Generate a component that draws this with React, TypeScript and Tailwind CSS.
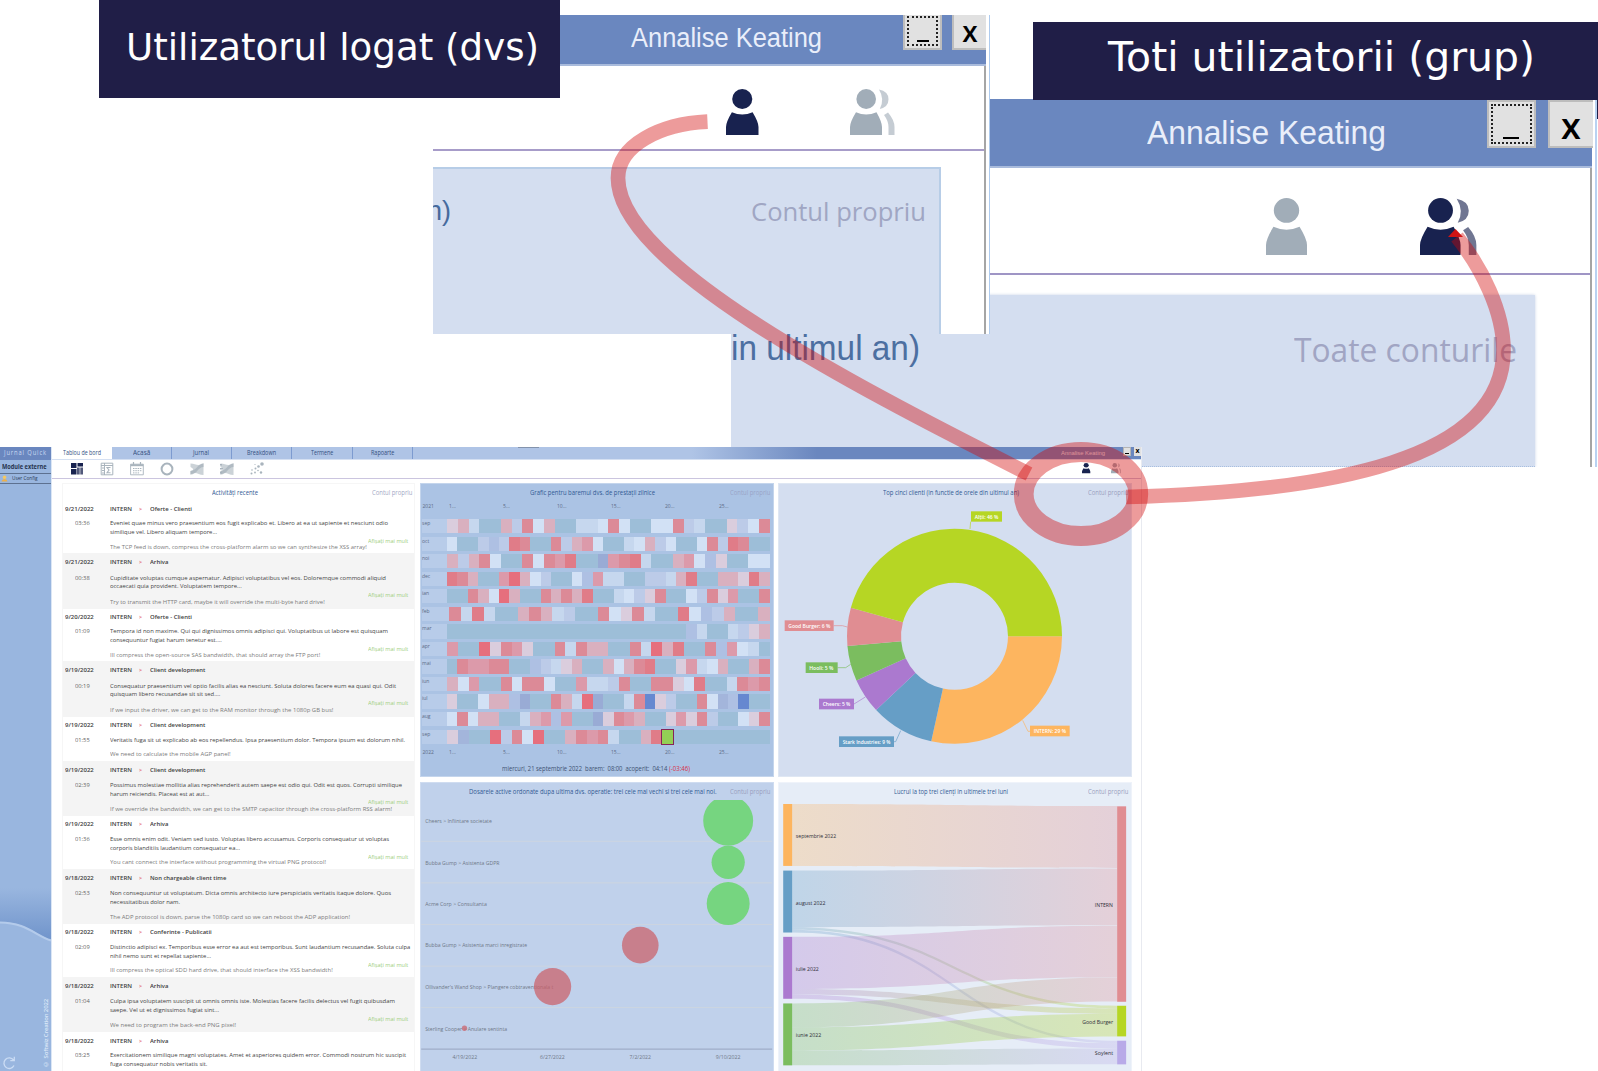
import React, { useLayoutEffect, useRef } from "react";

/** One line of text, condensed or stretched horizontally to an exact width. */
function Fit({ w, className = "", children }: { w: number; className?: string; children: React.ReactNode }) {
  const ref = useRef<HTMLSpanElement>(null);
  useLayoutEffect(() => {
    const el = ref.current;
    if (!el) return;
    el.style.transform = "none";
    const natural = el.getBoundingClientRect().width;
    if (natural > 0) el.style.transform = `scaleX(${w / natural})`;
  }, [w, children]);
  return (
    <span className={"block shrink-0 whitespace-pre " + className} style={{ width: w }}>
      <span ref={ref} className="inline-block origin-left">
        {children}
      </span>
    </span>
  );
}

function Person({ className }: { className: string }) {
  return (
    <svg viewBox="0 0 33 46" preserveAspectRatio="none" className={className} fill="currentColor">
      <ellipse cx="16.5" cy="10" rx="10.2" ry="10" />
      <path d="M6 23.2Q16.5 28 27 23.2Q33 33 33 38V46H0V38Q0 33 6 23.2Z" />
    </svg>
  );
}

function Group({ className }: { className: string }) {
  return (
    <svg viewBox="0 0 45 46" preserveAspectRatio="none" className={className} fill="currentColor">
      <ellipse cx="16.2" cy="10" rx="9.8" ry="10" />
      <path d="M6 23.2Q16.2 28 26.5 23.2Q32 33 32 38V46H0V38Q0 33 6 23.2Z" />
      <path opacity=".62" d="M29 .6Q38.5 2.5 38.5 10.3Q38.5 18 29.8 20Q35 10.500 29 .6Z" />
      <path opacity=".62" d="M34 26L38 23.400Q44.500 31 44.500 38V46H38.500V38Q38.500 32 34 26Z" />
    </svg>
  );
}

type Activity = {
  date: string; time: string; name: string; nw: number;
  lines: [string, number][]; note?: [string, number]; more?: boolean;
};

const activities: Activity[] = [
  { date: "9/21/2022", time: "03:36", name: "Oferte - Clienti", nw: 42, lines: [["Eveniet quae minus vero praesentium eos fugit explicabo et. Libero at ea ut sapiente et nesciunt odio", 278], ["similique vel. Libero aliquam tempore...", 107]], note: ["The TCP feed is down, compress the cross-platform alarm so we can synthesize the XSS array!", 256.7], more: true },
  { date: "9/21/2022", time: "00:38", name: "Arhiva", nw: 18.3, lines: [["Cupiditate voluptas cumque aspernatur. Adipisci voluptatibus vel eos. Doloremque commodi aliquid", 276], ["occaecati quia provident. Voluptatem tempore...", 131.7]], note: ["Try to transmit the HTTP card, maybe it will override the multi-byte hard drive!", 214.7], more: true },
  { date: "9/20/2022", time: "01:09", name: "Oferte - Clienti", nw: 42, lines: [["Tempora id non maxime. Qui qui dignissimos omnis adipisci qui. Voluptatibus ut labore est quisquam", 278], ["consequuntur fugiat harum tenetur est....", 111.7]], note: ["Ill compress the open-source SAS bandwidth, that should array the FTP port!", 210.3], more: true },
  { date: "9/19/2022", time: "00:19", name: "Client development", nw: 55.3, lines: [["Consequatur praesentium vel optio facilis alias ea nesciunt. Soluta dolores facere eum ea quasi qui. Odit", 286], ["quisquam libero recusandae sit sit sed....", 110.3]], note: ["If we input the driver, we can get to the RAM monitor through the 1080p GB bus!", 223.3], more: true },
  { date: "9/19/2022", time: "01:55", name: "Client development", nw: 55.3, lines: [["Veritatis fuga sit ut explicabo ab eos repellendus. Ipsa praesentium dolor. Tempora ipsum est dolorum nihil.", 295]], note: ["We need to calculate the mobile AGP panel!", 120.7] },
  { date: "9/19/2022", time: "02:39", name: "Client development", nw: 55.3, lines: [["Possimus molestiae mollitia alias reprehenderit autem saepe est odio qui. Odit est quos. Corrupti similique", 292], ["harum reiciendis. Placeat est at aut...", 99.3]], note: ["If we override the bandwidth, we can get to the SMTP capacitor through the cross-platform RSS alarm!", 282], more: true },
  { date: "9/19/2022", time: "01:36", name: "Arhiva", nw: 18.3, lines: [["Esse omnis enim odit. Veniam sed iusto. Voluptas libero accusamus. Corporis consequatur ut voluptas", 279], ["corporis blanditiis laudantium consequatur ea...", 130]], note: ["You cant connect the interface without programming the virtual PNG protocol!", 216], more: true },
  { date: "9/18/2022", time: "02:53", name: "Non chargeable client time", nw: 76.3, lines: [["Non consequuntur ut voluptatum. Dicta omnis architecto iure perspiciatis veritatis itaque dolore. Quos", 281], ["necessitatibus dolor nam.", 70]], note: ["The ADP protocol is down, parse the 1080p card so we can reboot the ADP application!", 240] },
  { date: "9/18/2022", time: "02:09", name: "Conferinte - Publicatii", nw: 61.7, lines: [["Distinctio adipisci ex. Temporibus esse error ea aut est temporibus. Sunt laudantium recusandae. Soluta culpa", 300.3], ["nihil nemo sunt et repellat sapiente...", 101]], note: ["Ill compress the optical SDD hard drive, that should interface the XSS bandwidth!", 222.7], more: true },
  { date: "9/18/2022", time: "01:04", name: "Arhiva", nw: 18.3, lines: [["Culpa ipsa voluptatem suscipit ut omnis omnis iste. Molestias facere facilis delectus vel fugit quibusdam", 285], ["saepe. Vel ut et dignissimos fugiat sint...", 109]], note: ["We need to program the back-end PNG pixel!", 126], more: true },
  { date: "9/18/2022", time: "03:25", name: "Arhiva", nw: 18.3, lines: [["Exercitationem similique magni voluptates. Amet et asperiores quidem error. Commodi nostrum hic suscipit", 296], ["fuga consequatur nobis veritatis sit.", 97.3]] },
];

function ActivityRow({ a, shaded }: { a: Activity; shaded: boolean }) {
  const short = a.lines.length === 1;
  const height = shaded ? "h-[55.5px]" : short ? "h-[44px]" : "h-[52.6px]";
  const gap = shaded ? "gap-[6.9px] pt-[5px]" : "gap-[6.1px] pt-[4.2px]";
  return (
    <div className={`relative flex shrink-0 flex-col pl-[2px] text-[6px] leading-[8.6px] text-[#444] ${height} ${gap} ${shaded ? "bg-[#f4f4f4]" : "bg-white"}`}>
      <div className="flex font-semibold text-[#3c3c3c]">
        <Fit w={28.8} className="mr-[16.2px]">{a.date}</Fit>
        <Fit w={22} className="mr-[7px]">INTERN</Fit>
        <Fit w={3} className="mr-[7.6px] text-[#e05560]">&gt;</Fit>
        <Fit w={a.nw}>{a.name}</Fit>
      </div>
      <div className="flex">
        <Fit w={14.7} className="mr-[20.3px] ml-[10px] text-[#646464]">{a.time}</Fit>
        <div>
          {a.lines.map(([t, w]) => <Fit key={t} w={w}>{t}</Fit>)}
        </div>
      </div>
      {a.note && <Fit w={a.note[1]} className="ml-[45px] text-[#7b7b7b]">{a.note[0]}</Fit>}
      {a.more && (
        <div className={`absolute left-[305px] text-[#a0ce80] ${shaded ? "top-[37.7px]" : "top-[36.4px]"}`}>
          <Fit w={40.3}>Afișați mai mult</Fit>
        </div>
      )}
    </div>
  );
}

const tones: Record<string, string> = {
  T: "bg-[#9dbed8]", w: "bg-[#d2e1f5]", l: "bg-[#c6d7ee]", p: "bg-[#bccbe8]", b: "bg-[#aec0e3]",
  n: "bg-[#99abd5]", B: "bg-[#6688d0]", k: "bg-[#dacddd]", m: "bg-[#d9b0bf]", r: "bg-[#dc9aaa]",
  R: "bg-[#dc8a97]", s: "bg-[#e07c88]", S: "bg-[#e66f7d]", c: "bg-[#a3b5db]",
  G: "bg-[#93cf55] outline outline-[1.5px] outline-[#862458] z-10",
};

const months: [string, string][] = [
  ["sep", "kmlTTmpRwmTTllwRwTTwwRplTTkpwR"],
  ["oct", "wTTpbpsRTTRpmrwTTlwmpwTTwRpsRTT"],
  ["noi", "mpmRwTTRwRrsTTnrRslTTmrwbkTTww"],
  ["dec", "sRmTTrSmwpTTwbrllTTpplmsTTmmksm"],
  ["ian", "TTRmwSmTTRmRmsTTlwpkRTTwpRkrTTR"],
  ["feb", "RlslTTmRmlpTTRwkRlTTswbpmTTm"],
  ["mar", "TTTTTTTTTTTTTTTTTTTTTTTblTTlpkm"],
  ["apr", "rTTSkRrkTTRlRmmTTRlSmsTTRbrwlT"],
  ["mai", "TRrrRRTTbplkmTTmwmRsTTkrlwmTTmR"],
  ["iun", "mwrTTRwRRwTTrllpRTTRRkwsTTlRrR"],
  ["iul", "kTTwmmbnTTRmlSnTTlRBkpTTRwcbBTT"],
  ["aug", "wRwmmTTlmrbrTTnkRrmTTkrkRpTTwkR"],
  ["sep", "kcTTSpRwSTTmRrRlTTmsGTTTTTTTTT"],
];

function Scale({ year }: { year: string }) {
  return (
    <div className="flex h-[8px] pl-[1.5px] text-[5px] leading-[8px] text-[#5b6b85]">
      <span className="w-[26.5px] shrink-0">{year}</span>
      {["1...", "5...", "10...", "15...", "20...", "25..."].map((d) => (
        <span key={d} className="w-[54px] shrink-0">{d}</span>
      ))}
    </div>
  );
}

function PanelHead({ title, w, left, gap, own = "text-[#9a9fc0]" }: { title: string; w: number; left: number; gap: number; own?: string }) {
  return (
    <div className="flex h-[18px] shrink-0 items-center text-[6.2px] leading-[9px] text-[#315a93]" style={{ paddingLeft: left, columnGap: gap }}>
      <Fit w={w}>{title}</Fit>
      <Fit w={40.5} className={own}>Contul propriu</Fit>
    </div>
  );
}

function Heatmap() {
  return (
    <section className="flex h-[294px] w-[354px] flex-col overflow-hidden border border-[#c4d5ec] bg-[#abc3e4]">
      <PanelHead title="Grafic pentru baremul dvs. de prestații zilnice" w={125} left={109} gap={75} own="text-[#9aa4c8]" />
      <div className="mt-[0.5px]"><Scale year="2021" /></div>
      <div className="mt-[9px] flex flex-col gap-[3.25px] pl-[1px]">
        {months.map(([m, days], i) => (
          <div key={i} className="flex h-[14.3px] w-[347.5px] bg-[#b8cce9]">
            <span className={`shrink-0 text-[5px] leading-[9.5px] text-[#5b6b85] ${m === "feb" ? "w-[27.3px]" : "w-[25px]"}`}>{m}</span>
            {days.split("").map((c, j) => <span key={j} className={`relative flex-1 ${tones[c]}`} />)}
          </div>
        ))}
      </div>
      <div className="mt-[4px]"><Scale year="2022" /></div>
      <div className="mt-[8px] ml-[80.5px] flex text-[6.2px] leading-[9px] text-[#3e5272]">
        <Fit w={165.3}>miercuri, 21 septembrie 2022  barem:  08:00  acoperit:  04:14</Fit>
        <Fit w={21} className="ml-[2px] text-[#d8304a]">(-03:46)</Fit>
      </div>
    </section>
  );
}

const cases: [string, number, number, number, number, boolean][] = [
  ["Cheers > Infiintare societate", 200, 940, 137, 75, true],
  ["Bubba Gump > Asistenta GDPR", 223, 940, 262, 50, true],
  ["Acme Corp > Consultanta", 185, 940, 386, 64.5, true],
  ["Bubba Gump > Asistenta marci inregistrate", 306, 676, 511, 55, false],
  ["Ollivander's Wand Shop > Plangere cobtraventionala t", 385, 412.5, 635.5, 56, false],
  ["Sterling Cooper > Anulare sentinta", 246, 148, 760.5, 8, false],
];

function Cases() {
  return (
    <section className="flex h-[289px] w-[354px] flex-col border border-b-0 border-[#cfdcf0] bg-[#c0d1eb]">
      <PanelHead title="Dosarele active ordonate dupa ultima dvs. operatie: trei cele mai vechi si trei cele mai noi." w={247.5} left={48} gap={13.5} />
      <svg viewBox="18 75 1056 813" className="-mt-[0.7px] block h-[271px] w-[352px]" fontFamily="Open Sans, sans-serif" fontSize="18" fill="#6f7888">
        {[199, 324, 449, 574, 698].map((y) => <path key={y} d={`M18 ${y}H1072`} stroke="#cdd5e0" strokeWidth="3" />)}
        <path d="M18 823H1072" stroke="#9fadc9" strokeWidth="4" />
        {cases.map(([t, w, , y]) => <text key={t} x="30" y={y + 7} textLength={w} lengthAdjust="spacingAndGlyphs">{t}</text>)}
        {cases.map(([t, , x, y, r, g]) => <circle key={t} cx={x} cy={y} r={r} fill={g ? "#76d580" : "#cb6068"} fillOpacity={g ? 1 : 0.73} />)}
        {([["4/19/2022", 149, 74], ["6/27/2022", 412, 74], ["7/2/2022", 676, 64], ["9/10/2022", 940, 74]] as [string, number, number][]).map(([t, x, w]) => (
          <text key={t} x={x - w / 2} y="854" textLength={w} lengthAdjust="spacingAndGlyphs">{t}</text>
        ))}
      </svg>
    </section>
  );
}

function arc(a0: number, a1: number) {
  const p = (r: number, a: number) => {
    const t = (a * Math.PI) / 180;
    return `${553.5 + r * Math.cos(t)} ${589 + r * Math.sin(t)}`;
  };
  return `M${p(322.5, a0)}A322.5 322.5 0 0 1 ${p(322.5, a1)}L${p(160.5, a1)}A160.5 160.5 0 0 0 ${p(160.5, a0)}Z`;
}

const slices: { c: string; a: [number, number]; t: string; box: [number, number, number, number]; tw: number; line: string }[] = [
  { c: "#fdb55f", a: [0, 102.5], t: "INTERN: 29 %", box: [780, 857, 119, 32], tw: 97, line: "M780 874H774L758 841" },
  { c: "#669ec6", a: [102.5, 136.8], t: "Stark Industries: 9 %", box: [207, 889, 165, 32], tw: 143, line: "M372 905H377L392 872" },
  { c: "#ab79cf", a: [136.8, 155.8], t: "Cheers: 5 %", box: [147, 776, 105, 32], tw: 83, line: "M252 792L286 771" },
  { c: "#7bbd5f", a: [155.8, 174.8], t: "Hooli: 5 %", box: [107, 667, 96, 32], tw: 72, line: "M203 683H227L242 673" },
  { c: "#e08d92", a: [174.8, 195.4], t: "Good Burger: 6 %", box: [44, 541, 147, 32], tw: 126, line: "M191 557H217L232 561" },
  { c: "#b6d624", a: [195.4, 360], t: "Alții: 46 %", box: [603, 214, 93, 31], tw: 71, line: "M602 245L600 267" },
];

function Clients() {
  return (
    <section className="flex h-[294px] w-[354px] flex-col border border-[#dfe7f3] bg-[#d4def0]">
      <PanelHead title="Top cinci clienti (in functie de orele din ultimul an)" w={136} left={104} gap={68.5} own="text-[#9a9fc0]" />
      <svg viewBox="27 186 1056 822" className="block h-[274px] w-[352px]" fontFamily="Open Sans, sans-serif" fontSize="17" fontWeight="600">
        {slices.map((s) => (
          <g key={s.t}>
            <path d={arc(s.a[0], s.a[1])} fill={s.c} />
            <path d={s.line} fill="none" stroke={s.c} strokeWidth="2" />
            <rect x={s.box[0]} y={s.box[1]} width={s.box[2]} height={s.box[3]} fill={s.c} />
            <text x={s.box[0] + 11} y={s.box[1] + 23} fill="#fff" textLength={s.tw} lengthAdjust="spacingAndGlyphs">{s.t}</text>
          </g>
        ))}
      </svg>
    </section>
  );
}

const flows: [string, number, number, number, number][] = [
  ["sr", 87, 273, 93, 279], ["ar", 287, 457, 281, 451], ["ag", 457, 465, 693, 701], ["al", 465, 473, 798, 806],
  ["vr", 486, 643, 453, 607], ["vg", 643, 659, 701, 717], ["vl", 659, 672, 806, 821],
  ["er", 686, 758, 608, 680], ["eg", 758, 827, 717, 785], ["el", 827, 872, 821, 869],
];
const hue: Record<string, string> = { s: "#fdb55f", a: "#669ec6", v: "#ab79cf", e: "#7bbd5f", r: "#e08d92", g: "#b6d624", l: "#b8aae8" };

function Sankey() {
  return (
    <section className="flex h-[289px] w-[354px] flex-col border border-b-0 border-[#eff3fa] bg-[#e6edf7]">
      <PanelHead title="Lucrul la top trei clienți in ultimele trei luni" w={114} left={115} gap={79.5} />
      <svg viewBox="27 75 1056 813" className="-mt-[0.7px] block h-[271px] w-[352px]" fontFamily="Open Sans, sans-serif" fontSize="18" fill="#2f2f38">
        <defs>
          {flows.map(([k]) => (
            <linearGradient key={k} id={`flow-${k}`} gradientUnits="userSpaceOnUse" x1="66" x2="1042" y1="0" y2="0">
              <stop stopColor={hue[k[0]]} />
              <stop offset="1" stopColor={hue[k[1]]} />
            </linearGradient>
          ))}
        </defs>
        {flows.map(([k, a, b, c, d]) => (
          <path key={k} fill={`url(#flow-${k})`} fillOpacity=".3" d={`M66 ${a}C554 ${a} 554 ${c} 1042 ${c}V${d}C554 ${d} 554 ${b} 66 ${b}Z`} />
        ))}
        {([["s", 39, 87, 186], ["a", 39, 287, 186], ["v", 39, 486, 186], ["e", 39, 686, 186], ["r", 1042, 94, 587], ["g", 1042, 693, 92], ["l", 1042, 798, 71]] as [string, number, number, number][]).map(([k, x, y, h]) => (
          <rect key={k} x={x} y={y} width="27" height={h} fill={hue[k]} />
        ))}
        {([["septembrie 2022", 77, 189, 121], ["august 2022", 77, 389, 89], ["iulie 2022", 77, 588, 69], ["iunie 2022", 77, 788, 76], ["INTERN", 975, 396, 54], ["Good Burger", 937, 748, 93], ["Soylent", 975, 842, 55]] as [string, number, number, number][]).map(([t, x, y, w]) => (
          <text key={t} x={x} y={y} textLength={w} lengthAdjust="spacingAndGlyphs">{t}</text>
        ))}
      </svg>
    </section>
  );
}

function ToolIcons() {
  const cls = "h-[14px] w-[14px] shrink-0 text-[#a9b4bd]";
  const flow = (lead: boolean) => (
    <svg viewBox="0 0 14 14" className={cls} fill="currentColor">
      <path opacity=".6" d="M.5 1.500C6 1.500 8 5 13.500 1V13C8 13 6 9 .5 12.500V9C4 8 4 7 .5 5Z" />
      <path opacity=".8" d="M.5 9C6 9 8 1.500 13.500 1.500V5C8 5 7 12.500 .5 12.500Z" />
      {lead && <path d="M0 2h2v1.500H0ZM0 6h3v1.500H0ZM0 10h2v1.500H0Z" />}
    </svg>
  );
  return (
    <div className="flex h-[18px] items-center gap-[16px] pl-[17.6px]">
      <svg viewBox="0 0 14 14" className="h-[14px] w-[14px] shrink-0" fill="#18224f">
        <path d="M1 1H6.500V6H1ZM1 7H6.500V12.500H1ZM7.500 1H13V4.500H7.500Z" />
        <path opacity=".75" d="M7 5.500H9.700V12.500H7ZM10.300 5.500H13V12.500H10.300Z" />
      </svg>
      <svg viewBox="0 0 14 14" className={cls} fill="none" stroke="currentColor">
        <path d="M1.200 1.200H12.800V12.800H1.200ZM1 3.500H13M4.500 1V13" strokeWidth="1" />
        <path d="M10.500 5.500H7L9 8L7 10.800H10.500M2 6H4M2 8.500H4M2 11H4" strokeWidth="1.100" />
      </svg>
      <svg viewBox="0 0 14 14" className={cls} fill="none" stroke="currentColor">
        <path d="M.6 2.200H13.300V12.800H.6Z" strokeWidth=".9" />
        <path d="M.6 3.200H13.300" strokeWidth="2" />
        <path d="M3.500 0V3M10.500 0V3" strokeWidth="1.200" />
        <path d="M3 6.500H11.500M3 8.700H11.500M3 10.900H9.500" strokeWidth="1" strokeDasharray="1.500 .8" />
      </svg>
      <svg viewBox="0 0 14 14" className={cls} fill="none" stroke="currentColor" strokeWidth="2">
        <circle cx="7" cy="7" r="5.400" />
      </svg>
      {flow(false)}
      {flow(true)}
      <svg viewBox="0 0 14 14" className={cls} fill="currentColor">
        <circle cx="12" cy="2" r="1.800" /><circle cx="8.500" cy="4.500" r="1.300" /><circle cx="5.500" cy="6.500" r="1" />
        <circle cx="2" cy="8" r=".8" /><circle cx="1.500" cy="11.500" r="1" /><circle cx="5" cy="10.500" r=".9" />
        <circle cx="8" cy="8.500" r=".8" /><circle cx="11" cy="10.500" r="1.200" /><circle cx="5" cy="2.500" r=".6" />
      </svg>
    </div>
  );
}

function Sidebar() {
  return (
    <aside className="flex w-[52px] shrink-0 flex-col border-r border-[#dbe6f5] bg-[#99b6df]">
      <div className="flex h-[12.500px] items-center bg-[#6a87bf] pl-[4px] text-[6.800px] leading-none text-[#c9d8f2]">
        <Fit w={43} className="tracking-[1px]">Jurnal Quick</Fit>
      </div>
      <div className="flex h-[14.200px] items-end border-b border-[#5d7190] pb-[1.500px] pl-[2px] text-[6.800px] leading-[8px] font-bold text-[#26344e]">
        <Fit w={44.5}>Module externe</Fit>
      </div>
      <div className="flex h-[10px] items-center gap-[4px] border-b border-[#5d7190] pl-[1px] text-[6px] leading-none text-[#2c3b56]">
        <svg viewBox="0 0 8 8" className="h-[7px] w-[7px] shrink-0">
          <circle cx="4" cy="2.600" r="2" fill="#f6c860" />
          <path d="M.5 7.500Q1 4.500 4 4.500T7.500 7.500Z" fill="#eeb04a" />
        </svg>
        <Fit w={25.5}>User Config</Fit>
      </div>
      <svg viewBox="0 0 51 60" className="mt-[404px] block h-[60px] w-[51px] shrink-0">
        <defs>
          <linearGradient id="dusk" x1="0" x2="0" y1="0" y2="1">
            <stop stopColor="#99b6df" /><stop offset="1" stopColor="#7094cb" />
          </linearGradient>
        </defs>
        <path d="M0 0H51V52C36 47 26 34 0 34Z" fill="url(#dusk)" />
        <path d="M0 34.500C26 34.500 36 48 51 52.500" fill="none" stroke="#b4cbeb" strokeWidth="2.200" />
      </svg>
      <div className="mt-auto flex items-end justify-between pb-[1px] pl-[2px]">
        <svg viewBox="0 0 14 14" className="h-[14px] w-[14px]" fill="none" stroke="#cbdcf4" strokeWidth="1.300">
          <path d="M11.500 4A5.300 5.300 0 1 0 12 9.500M12.300 .8V4.600H8.300" />
        </svg>
        <div className="mb-[2px] w-[9px] rotate-180 text-[6px] leading-[9px] font-semibold tracking-[-0.15px] whitespace-nowrap text-[#dce8f8] [writing-mode:vertical-rl]">
          © Softwiz Creation 2022
        </div>
      </div>
    </aside>
  );
}

const tabs: [string, number][] = [["Acasă", 17.3], ["Jurnal", 16], ["Breakdown", 29], ["Termene", 22.3], ["Rapoarte", 23.3]];

function Dashboard() {
  return (
    <div className="absolute top-[447px] left-0 flex h-[624px] w-[1142px] overflow-hidden bg-white">
      <Sidebar />
      <main className="flex w-[1090px] shrink-0 flex-col border-r border-[#e8eaf0] bg-white">
        <header className="relative flex h-[12.500px] shrink-0 border-b border-[#d5e0f2] bg-[linear-gradient(90deg,#afc4e6_0px,#afc4e6_640px,#6a87bf_765px)] text-[6.200px] leading-none text-[#34507f]">
          <div className="flex w-[59.500px] shrink-0 items-center justify-center bg-white"><Fit w={38}>Tablou de bord</Fit></div>
          {tabs.map(([t, w]) => (
            <div key={t} className="flex w-[60.300px] shrink-0 items-center justify-center border-r border-[#7d9bd0]"><Fit w={w}>{t}</Fit></div>
          ))}
          <span className="absolute top-0 left-[466px] h-px w-[21px] bg-[#8393ad]" />
          <div className="mr-[18px] ml-auto flex items-center text-[#e6ecf8] [font-family:'Liberation_Sans',sans-serif]"><Fit w={44}>Annalise Keating</Fit></div>
          <div className="mr-[3px] flex h-[9px] w-[8.500px] items-end justify-center border border-[#b5b5b5] bg-[#e1e1e1] pb-px text-black"><span className="h-px w-[4px] bg-black" /></div>
          <div className="h-[9px] w-[7px] bg-[#e1e1e1] text-center text-[7px] leading-[8.500px] font-bold text-black">x</div>
        </header>
        <div className="flex h-[19px] shrink-0 border-b border-[#cbc5df]">
          <ToolIcons />
          <div className="mr-[20px] ml-auto flex items-center gap-[20px]">
            <Person className="h-[10.300px] w-[8.300px] text-[#18224f]" />
            <Group className="h-[10.300px] w-[10.500px] text-[#a1adb8]" />
          </div>
        </div>
        <div className="flex min-h-0 flex-1 gap-[4px] overflow-hidden pt-[4px] pl-[10px]">
          <section className="mr-px flex w-[353px] shrink-0 flex-col overflow-hidden border border-b-0 border-[#f6f6f6]">
            <div className="h-[17px] shrink-0"><PanelHead title="Activități recente" w={46} left={148.500} gap={114} own="text-[#a3a9c6]" /></div>
            {activities.map((a, i) => <ActivityRow key={i} a={a} shaded={i % 2 === 1} />)}
          </section>
          <div className="flex shrink-0 flex-col gap-[5px]"><Heatmap /><Cases /></div>
          <div className="flex shrink-0 flex-col gap-[5px]"><Clients /><Sankey /></div>
        </div>
      </main>
    </div>
  );
}

function OwnAccountCrop() {
  return (
    <div className="absolute top-[15px] left-[433px] flex h-[318.500px] w-[556.500px] overflow-hidden border-r border-[#aecbee] bg-white">
      <div className="flex w-[553px] shrink-0 flex-col">
        <div className="flex h-[51px] shrink-0 border-b-2 border-[#a9bbdc] bg-[#6a87bf] pl-[198px]">
          <Fit w={191} className="mr-[81px] text-[27px] leading-[46.500px] text-[#e9eefa] [font-family:'Liberation_Sans',sans-serif]">Annalise Keating</Fit>
          <div className="mr-[10px] flex h-[35px] w-[39px] shrink-0 justify-center border-2 border-t-0 border-[#bdbdbd] bg-[#e1e1e1] pt-px">
            <div className="flex h-[30px] w-[31px] items-end justify-center border-2 border-dotted border-[#222]"><span className="mb-[2px] h-[2px] w-[12px] bg-black" /></div>
          </div>
          <div className="h-[35px] w-[34px] shrink-0 border-b-2 border-l-2 border-[#bdbdbd] bg-[#e1e1e1] text-center text-[28px] leading-[33px] font-semibold text-black [font-family:'Open_Sans',sans-serif]">x</div>
        </div>
        <div className="flex flex-1 flex-col border-r-2 border-[#a5a5a5]">
          <div className="flex h-[85px] shrink-0 border-b-2 border-[#a79cc9] pt-[23px] pl-[293px]">
            <Person className="mr-[91px] h-[46px] w-[32.500px] text-[#18224f]" />
            <Group className="h-[46px] w-[45px] text-[#a1adb8]" />
          </div>
          <div className="mt-[16px] flex w-[508px] flex-1 justify-between border-t-2 border-r-2 border-[#b7cde7] bg-[#d4def0] pt-[25px] pr-[13px] leading-[34px]">
            <div className="flex w-[18px] justify-end overflow-hidden text-[27px] text-[#466a9d] [font-family:'Liberation_Sans',sans-serif]">n)</div>
            <Fit w={175} className="text-[26px] text-[#a0a6c3]">Contul propriu</Fit>
          </div>
        </div>
      </div>
    </div>
  );
}

function AllAccountsCrop() {
  return (
    <div className="absolute top-[99px] left-[731px] flex h-[367.500px] w-[866px] overflow-hidden border-r-2 border-[#b9d2f1] bg-white">
      <div className="flex w-[861px] shrink-0 flex-col">
        <div className="flex h-[69px] shrink-0 border-b-2 border-[#a9bbdc] bg-[#6a87bf] pt-px pl-[415.500px]">
          <Fit w={239} className="mr-[101px] text-[33px] leading-[65px] text-[#e9eefa] [font-family:'Liberation_Sans',sans-serif]">Annalise Keating</Fit>
          <div className="mr-[12px] flex h-[48px] w-[49px] shrink-0 items-center justify-center border-2 border-[#bdbdbd] bg-[#e1e1e1]">
            <div className="flex h-[40px] w-[41px] items-end justify-center border-[2.500px] border-dotted border-[#222]"><span className="mb-[3px] h-[2px] w-[16px] bg-black" /></div>
          </div>
          <div className="h-[48px] w-[45px] shrink-0 border-2 border-r-0 border-[#bdbdbd] bg-[#e1e1e1] text-center text-[36px] leading-[47px] font-semibold text-black [font-family:'Open_Sans',sans-serif]">x</div>
        </div>
        <div className="flex flex-1 flex-col border-r-2 border-[#a5a5a5]">
          <div className="flex h-[106.500px] shrink-0 border-b-2 border-[#9f95c5] pt-[30px] pl-[535px]">
            <Person className="mr-[113px] h-[57px] w-[41px] text-[#a1adb8]" />
            <Group className="h-[57px] w-[57px] text-[#18224f]" />
          </div>
          <div className="mt-[20.500px] flex h-[172px] w-[804px] shrink-0 justify-between border-b border-dotted border-[#a8bfe0] bg-[#d4def0] pt-[31px] pr-[18px] leading-[44px] shadow-[0_0_3px_#c9d3e6]">
            <Fit w={189} className="text-[35px] text-[#4c6fa1] [font-family:'Liberation_Sans',sans-serif]">in ultimul an)</Fit>
            <Fit w={223} className="pt-[2px] text-[33px] text-[#a1a5c3]">Toate conturile</Fit>
          </div>
        </div>
      </div>
    </div>
  );
}

export default function App() {
  return (
    <div className="relative h-[1071px] w-[1598px] overflow-hidden bg-white [font-family:'Open_Sans','Noto_Sans',sans-serif]">
      <AllAccountsCrop />
      <OwnAccountCrop />
      <Dashboard />
      <div className="absolute top-0 left-[98.500px] h-[97.500px] w-[461.500px] bg-[#201e47] pl-[27.500px] text-[37.500px] leading-[94px] text-white [font-family:'DejaVu_Sans',sans-serif]">
        <Fit w={413}>Utilizatorul logat (dvs)</Fit>
      </div>
      <div className="absolute top-[99px] left-[1597px] h-[20px] w-px bg-[#201e47]" />
      <div className="absolute top-[22px] left-[1032.500px] h-[77.500px] w-[565.500px] bg-[#201e47] pl-[75px] text-[41px] leading-[70px] text-white [font-family:'DejaVu_Sans',sans-serif]">
        <Fit w={427}>Toti utilizatorii (grup)</Fit>
      </div>
      <svg viewBox="0 0 1598 1071" className="pointer-events-none absolute inset-0 h-[1071px] w-[1598px]" fill="none" stroke="#d20404" strokeOpacity=".4">
        <path strokeWidth="14.700" d="M707.500 121.700C660 124 618 145 618 178C618 262 838 378 1029 474" />
        <ellipse cx="1081" cy="494" rx="57.300" ry="42" strokeWidth="19.800" />
        <path strokeWidth="14.700" d="M1126 497C1330 492 1503.500 460 1503.500 350C1503.500 312 1482 268 1457 237" />
        <path d="M1455.500 229L1448 237H1463Z" fill="#d01414" stroke="none" />
      </svg>
    </div>
  );
}
